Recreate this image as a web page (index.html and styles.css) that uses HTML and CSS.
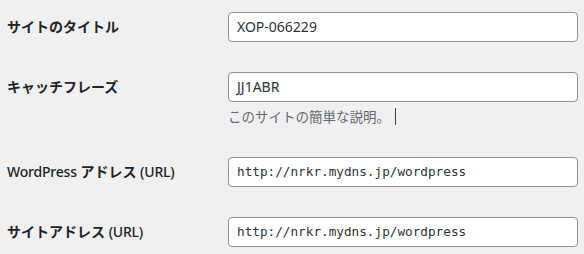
FILE: index.html
```html
<!DOCTYPE html>
<html lang="ja">
<head>
<meta charset="utf-8">
<link rel="stylesheet" href="styles.css">
</head>
<body>
<div class="form">
  <div class="row">
    <label class="label">サイトのタイトル</label>
    <div class="field"><div class="input">XOP-066229</div></div>
  </div>
  <div class="row">
    <label class="label">キャッチフレーズ</label>
    <div class="field">
      <div class="input">JJ1ABR</div>
      <p class="desc">このサイトの簡単な説明。<span class="caret"></span></p>
    </div>
  </div>
  <div class="row">
    <label class="label"><span class="latin">WordPress</span> アドレス <span class="latin">(URL)</span></label>
    <div class="field"><div class="input code">http://nrkr.mydns.jp/wordpress</div></div>
  </div>
  <div class="row">
    <label class="label">サイトアドレス <span class="latin">(URL)</span></label>
    <div class="field"><div class="input code">http://nrkr.mydns.jp/wordpress</div></div>
  </div>
</div>
</body>
</html>
```
FILE: styles.css
```css
html, body {
  margin: 0;
  padding: 0;
  background: #f0f0f1;
}
body {
  font-family: "Noto Sans", "Noto Sans CJK JP", sans-serif;
  color: #1d2327;
}
.form {
  display: flex;
  flex-direction: column;
  gap: 30px;
  padding: 12px 6px 0 7px;
}
.row {
  display: grid;
  grid-template-columns: 221px 350px;
  align-items: start;
}
.label {
  font-family: "Noto Sans", "Noto Sans CJK JP", sans-serif;
  font-size: 14px;
  font-weight: 700;
  line-height: 30px;
  height: 30px;
  color: #1d2327;
  white-space: nowrap;
}
.latin {
  font-family: "Noto Sans", sans-serif;
  font-weight: 500;
  letter-spacing: -0.2px;
}
.field {
  display: flex;
  flex-direction: column;
}
.input {
  box-sizing: border-box;
  height: 30px;
  border: 1px solid #8c8f94;
  border-radius: 4px;
  background: #fff;
  padding: 0 8px;
  font-size: 14px;
  line-height: 28px;
  color: #2c3338;
  font-family: "Noto Sans", "Noto Sans CJK JP", sans-serif;
}
.input.code {
  font-family: "DejaVu Sans Mono", monospace;
  font-size: 12.7px;
}
.desc {
  margin: 4px 0 0 0;
  height: 21px;
  font-size: 13.5px;
  line-height: 21px;
  color: #646970;
  font-family: "Noto Sans CJK JP", sans-serif;
  display: flex;
  align-items: center;
}
.caret {
  display: inline-block;
  width: 1px;
  height: 17px;
  background: #3c434a;
  margin-left: 5px;
}
```
